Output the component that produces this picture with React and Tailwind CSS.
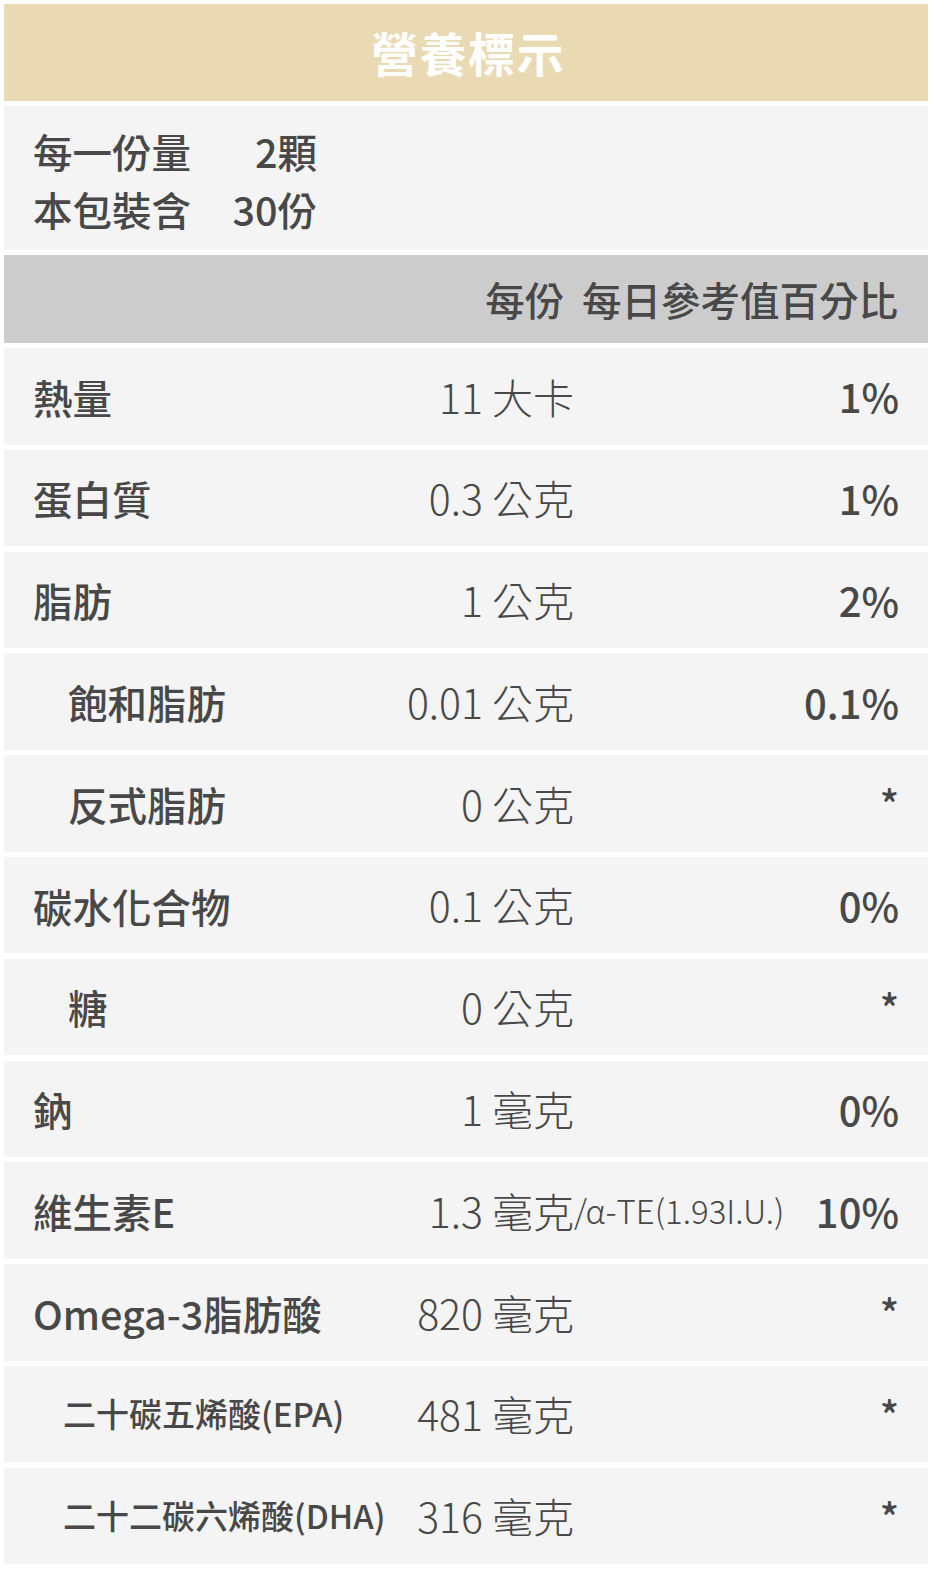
import React from 'react'

const FONT = { fontFamily: '"Noto Sans CJK TC", "Noto Sans", sans-serif' }

const rows = [
  { label: '熱量', value: '11 大卡', pct: '1%' },
  { label: '蛋白質', value: '0.3 公克', pct: '1%' },
  { label: '脂肪', value: '1 公克', pct: '2%' },
  { label: '飽和脂肪', value: '0.01 公克', pct: '0.1%', indent: 'pl-[35px]' },
  { label: '反式脂肪', value: '0 公克', pct: '*', indent: 'pl-[35px]' },
  { label: '碳水化合物', value: '0.1 公克', pct: '0%' },
  { label: '糖', value: '0 公克', pct: '*', indent: 'pl-[35px]' },
  { label: '鈉', value: '1 毫克', pct: '0%' },
  { label: '維生素E', value: '1.3 毫克', suffix: '/α-TE(1.93I.U.)', pct: '10%' },
  { label: 'Omega-3脂肪酸', value: '820 毫克', pct: '*' },
  { label: '二十碳五烯酸(EPA)', value: '481 毫克', pct: '*', indent: 'pl-[30px]', small: true },
  { label: '二十二碳六烯酸(DHA)', value: '316 毫克', pct: '*', indent: 'pl-[30px]', small: true },
]

function Row({ r }) {
  return (
    <div className="flex items-center h-[96.5px] bg-[#f4f4f4] pl-[29px] pr-[29px]">
      <div className="w-[541px] flex items-center justify-between">
        <span className={`${r.indent ?? ''} ${r.small ? 'text-[33px]' : 'text-[39.5px]'} font-medium whitespace-nowrap`}>
          {r.label}
        </span>
        <span className="text-[41px] font-light whitespace-nowrap">{r.value}</span>
      </div>
      <div className="flex-1 flex items-center justify-between">
        <span className="text-[33px] font-light whitespace-nowrap">{r.suffix ?? ''}</span>
        <span className="text-[40px] font-medium">{r.pct}</span>
      </div>
    </div>
  )
}

export default function App() {
  return (
    <div className="w-[934px] h-[1572px] bg-white text-[#484848] overflow-hidden" style={FONT}>
      <div className="flex flex-col gap-[5px] pt-[4px] pl-[4px] pr-[6px]">

        {/* ── Title ── */}
        <div className="h-[97px] bg-[#e9dab3] flex items-center justify-center">
          <h1 className="text-[47px] font-bold text-white tracking-[1.5px] pl-[4px]">營養標示</h1>
        </div>

        {/* ── Serving info ── */}
        <div className="h-[144px] bg-[#f4f4f4] pl-[29px] pt-[4px] flex flex-col justify-center gap-[4px] text-[39.5px] font-medium leading-[54px]">
          <div className="flex w-[284px] justify-between"><span>每一份量</span><span>2顆</span></div>
          <div className="flex w-[284px] justify-between"><span>本包裝含</span><span>30份</span></div>
        </div>

        {/* ── Column header ── */}
        <div className="h-[88px] bg-[#cccccc] flex items-center justify-end pr-[30px] text-[39.5px] font-medium">
          <span className="whitespace-pre">每份  每日參考值百分比</span>
        </div>

        {/* ── Nutrient rows ── */}
        <div className="flex flex-col gap-[5.3px]">
          {rows.map(r => <Row key={r.label} r={r} />)}
        </div>
      </div>
    </div>
  )
}
